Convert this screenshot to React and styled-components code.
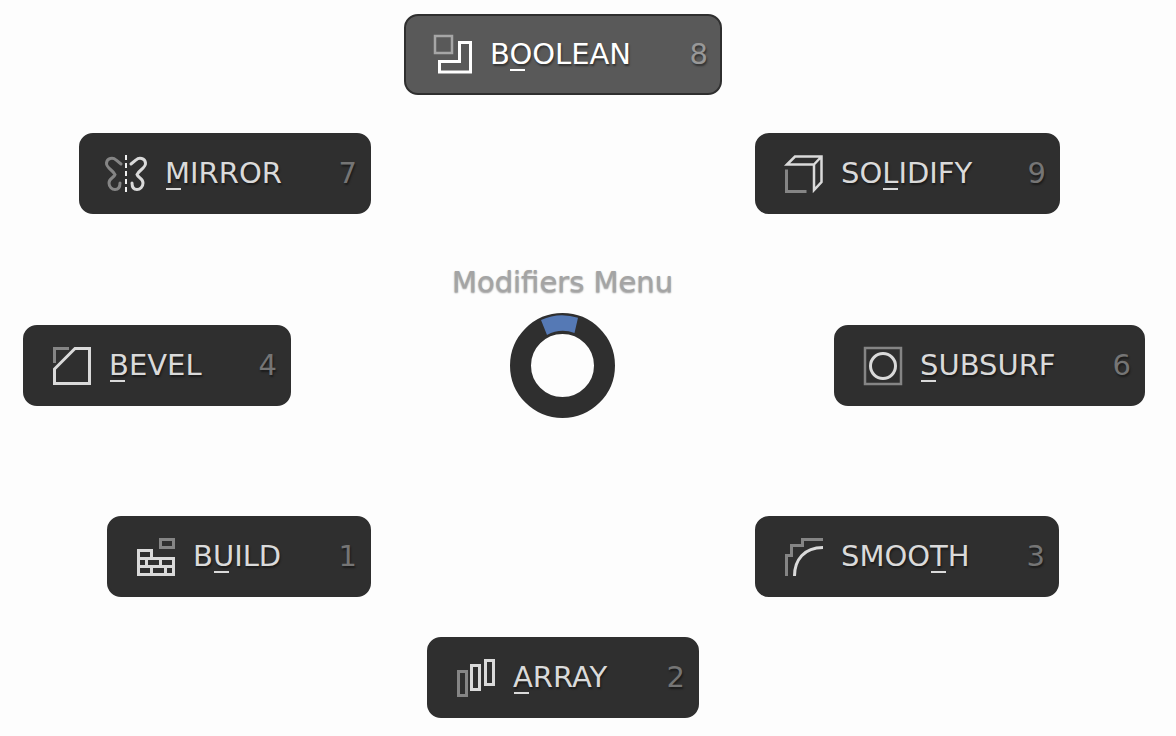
import React from "react";
import styled, { createGlobalStyle } from "styled-components";

const GlobalStyle = createGlobalStyle`
  * { box-sizing: border-box; }
  body { margin: 0; background: #fdfdfd; }
`;

const Page = styled.main`
  display: flex;
  flex-direction: column;
  padding: 14px 50px 16px 0;
  font-family: "DejaVu Sans", Verdana, sans-serif;
  font-size: 29px;
  line-height: 34px;
`;

const Row = styled.div`
  display: grid;
  grid-template-columns: minmax(0, 1fr) ${(p) => p.$middle} minmax(0, 1fr);
  align-items: center;
  margin-top: ${(p) => p.$space || "0"};
`;

const HubRow = styled(Row)`
  padding-right: 1px;
`;

const Cell = styled.div`
  display: flex;
  justify-content: ${(p) => p.$align || "center"};
`;

const Hub = styled.div`
  display: flex;
  flex-direction: column;
  align-items: center;
  gap: 14px;
  padding-bottom: 48px;
`;

const Title = styled.h1`
  margin: 0;
  font-size: 29px;
  font-weight: normal;
  line-height: 34px;
  color: #a4a4a4;
  text-shadow: 0 1px 2px #b4b4b4, 0 1px 1px #a8a8a8;
`;

const ItemButton = styled.button`
  display: flex;
  align-items: center;
  flex: none;
  width: ${(p) => p.$width};
  height: 81px;
  padding: 0 12px 0 28px;
  border: 2px solid #2f2f2f;
  border-radius: 14px;
  background: ${(p) => (p.$active ? "#595959" : "#2f2f2f")};
  color: ${(p) => (p.$active ? "#ffffff" : "#dadada")};
  font: inherit;
  text-shadow: 1px 2px 2px rgba(0, 0, 0, 0.45);
  cursor: pointer;
`;

const Label = styled.span`
  margin-left: 18px;
  padding-bottom: 2px;
  white-space: nowrap;
`;

const Accel = styled.span`
  position: relative;

  &::after {
    content: "";
    position: absolute;
    left: 1px;
    bottom: 0;
    width: 15px;
    height: 2px;
    background: currentColor;
  }
`;

const Shortcut = styled.span`
  margin-left: auto;
  padding-bottom: 2px;
  color: ${(p) => (p.$active ? "#989898" : "#757575")};
`;

const Glyph = styled.svg`
  flex: none;
  width: 38px;
  height: 38px;
  overflow: visible;
  fill: none;
  stroke: currentColor;
  stroke-width: 3;

  .dim { stroke: ${(p) => (p.$active ? "#a6a6a6" : "#858585")}; }
`;

const icons = {
  boolean: (
    <>
      <path className="dim" strokeWidth="2.500" d="M1 0h17v17h-17z" />
      <path d="M25.500 6.500h11v29.500h-31v-10.500h20z" />
    </>
  ),
  mirror: (
    <>
      <path
        className="dim"
        strokeLinecap="round"
        d="M12 9L7 5C4 2 -2 3 -2.500 8C-3 13 4 15 6 19.500C5 23 0 23 0 28C0 32 3 34.500 6 34.500C9 34.500 11 33 11 28"
      />
      <path
        strokeLinecap="round"
        d="M22 9L27 5C30 2 36 3 36.500 8C37 13 30 15 28 19.500C29 23 34 23 34 28C34 32 31 34.500 28 34.500C25 34.500 23 33 23 28"
      />
      <path strokeWidth="2" strokeDasharray="5 3" d="M17 0v38" stroke="#f0f0f0" />
    </>
  ),
  solidify: (
    <>
      <path className="dim" d="M1.500 14.500v22h20" />
      <path strokeWidth="2.500" d="M2 9.500L10 1.500H36.500V27L29 35V9.500ZM29 9.500L36.500 1.500" />
    </>
  ),
  bevel: (
    <>
      <path className="dim" d="M1.500 16V1.500H16" />
      <path d="M1.500 36.500V22L22 1.500H36.500V36.500Z" />
    </>
  ),
  subsurf: (
    <>
      <path className="dim" strokeWidth="2.500" d="M1 1h36v36H1z" />
      <circle cx="19" cy="19" r="12.500" />
    </>
  ),
  build: (
    <>
      <path className="dim" d="M23.500 1.500h13v8h-13z" />
      <path d="M1.500 12.500h13v8h-13zM1.500 20.500h35v16h-35zM1.500 28.500h35M9.500 20v8M23.500 20v8M14.500 28v8M28.500 28v8" />
    </>
  ),
  smooth: (
    <>
      <path className="dim" d="M1.500 38V17.500H6.500V7.500H17.500V1.500H38" />
      <path d="M9.500 38C9.500 22 19 9.500 38 9.500" />
    </>
  ),
  array: (
    <>
      <path className="dim" d="M1.500 12.500h8v24h-8z" />
      <path d="M14.500 6.500h8v24h-8zM28.500 1.500h8v24h-8z" />
    </>
  ),
};

function PieItem({ icon, label, accel, shortcut, width, active }) {
  return (
    <ItemButton type="button" $width={width} $active={active}>
      <Glyph viewBox="0 0 38 38" aria-hidden="true" $active={active}>
        {icons[icon]}
      </Glyph>
      <Label>
        {label.slice(0, accel)}
        <Accel>{label[accel]}</Accel>
        {label.slice(accel + 1)}
      </Label>
      <Shortcut $active={active}>{shortcut}</Shortcut>
    </ItemButton>
  );
}

function DirectionRing() {
  return (
    <svg width="105" height="105" viewBox="-52.500 -52.500 105 105" aria-hidden="true">
      <circle r="42" fill="none" stroke="#2f2f2f" strokeWidth="21" />
      <path d="M-21.500 -45.500A50 50 0 0 1 15.500 -47.700L12 -32.500A34 34 0 0 0 -15.500 -30.500Z" fill="#5579b5" />
    </svg>
  );
}

export default function App() {
  return (
    <>
      <GlobalStyle />
      <Page>
        <Cell>
          <PieItem icon="boolean" label="BOOLEAN" accel={1} shortcut="8" width="318px" active />
        </Cell>
        <Row $middle="384px" $space="38px">
          <Cell $align="flex-end">
            <PieItem icon="mirror" label="MIRROR" accel={0} shortcut="7" width="292px" />
          </Cell>
          <span />
          <Cell $align="flex-start">
            <PieItem icon="solidify" label="SOLIDIFY" accel={2} shortcut="9" width="305px" />
          </Cell>
        </Row>
        <HubRow $middle="543px" $space="51px">
          <Cell $align="flex-end">
            <PieItem icon="bevel" label="BEVEL" accel={0} shortcut="4" width="268px" />
          </Cell>
          <Hub>
            <Title>Modifiers Menu</Title>
            <DirectionRing />
          </Hub>
          <Cell $align="flex-start">
            <PieItem icon="subsurf" label="SUBSURF" accel={0} shortcut="6" width="311px" />
          </Cell>
        </HubRow>
        <Row $middle="384px" $space="50px">
          <Cell $align="flex-end">
            <PieItem icon="build" label="BUILD" accel={1} shortcut="1" width="264px" />
          </Cell>
          <span />
          <Cell $align="flex-start">
            <PieItem icon="smooth" label="SMOOTH" accel={4} shortcut="3" width="304px" />
          </Cell>
        </Row>
        <Row $middle="272px" $space="40px">
          <span />
          <PieItem icon="array" label="ARRAY" accel={0} shortcut="2" width="272px" />
        </Row>
      </Page>
    </>
  );
}
